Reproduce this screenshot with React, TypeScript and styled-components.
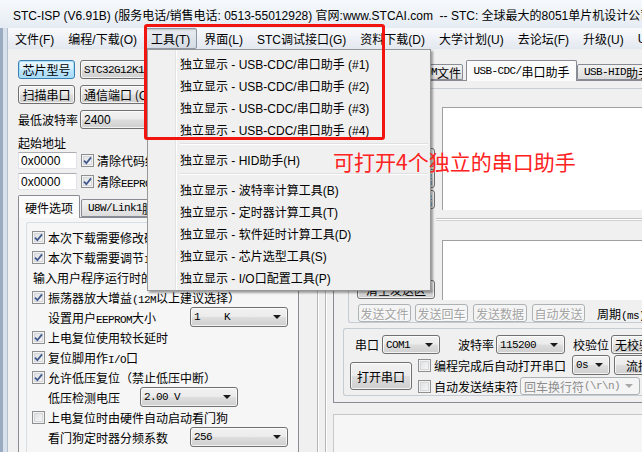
import React from 'react';
import styled, { createGlobalStyle, css } from 'styled-components';

const UI = `"Liberation Sans", "Noto Sans CJK SC", sans-serif`;
const SONG = `"Noto Sans CJK SC", "Liberation Sans", sans-serif`;

const GlobalStyle = createGlobalStyle`
  html, body { margin: 0; padding: 0; }
  body {
    width: 642px;
    height: 452px;
    overflow: hidden;
    background: #f0f0f0;
    font-family: ${UI};
    font-size: 12px;
    color: #000;
  }
`;

const Window = styled.div`
  position: relative;
  width: 642px;
  height: 452px;
  display: flex;
  flex-direction: column;
  overflow: hidden;
  background: #f0f0f0;
`;

const TitleBar = styled.div`
  height: 28px;
  flex: none;
  display: flex;
  align-items: center;
  gap: 5px;
  padding-left: 8px;
  background: linear-gradient(#f6f9fc, #e6ecf4);
  white-space: pre;
  overflow: hidden;
`;

const TitleText = styled.span`
  font-size: 12px;
  color: #000;
`;

const Frame = styled.div`
  flex: 1;
  display: flex;
  min-height: 0;
`;

const FrameEdge = styled.div`
  width: 8px;
  flex: none;
  background: linear-gradient(to right, #9aabc1 0 3px, #d7e0eb 3px 7px, #b3bfcd 7px 8px);
`;

const Client = styled.div`
  flex: 1;
  display: flex;
  flex-direction: column;
  min-width: 0;
`;

const MenuBar = styled.div`
  height: 21px;
  flex: none;
  display: flex;
  align-items: stretch;
  background: linear-gradient(#f9fafc, #e3e8f0);
  white-space: nowrap;
`;

const MenuItem = styled.div<{ $open?: boolean }>`
  display: flex;
  align-items: center;
  padding: 0 7px;
  box-sizing: border-box;
  ${(p) =>
    p.$open &&
    css`
      padding: 0 6px;
      border: 1px solid #8d97a5;
      border-radius: 2px;
      background: linear-gradient(#e9edf2, #d6dce5);
      box-shadow: inset 1px 1px 2px rgba(0, 0, 0, 0.18);
    `}
`;

const Body = styled.div`
  flex: 1;
  display: flex;
  min-height: 0;
  overflow: hidden;
`;

/* ---------- shared controls ---------- */

const Mono = styled.span`
  font-family: "Liberation Mono", monospace;
  font-size: 11px;
  letter-spacing: -0.6px;
`;

// half-width latin runs (SimSun style) inside CJK labels
const half = (s: string) =>
  s.split(/([!-~][ !-~]*)/).map((part, i) => (i % 2 ? <Mono key={i}>{part}</Mono> : part));

const Btn = styled.div<{ $w: number; $h?: number; $ml?: number; $focus?: boolean; $disabled?: boolean }>`
  width: ${(p) => p.$w}px;
  height: ${(p) => p.$h ?? 19}px;
  margin-left: ${(p) => p.$ml ?? 0}px;
  box-sizing: border-box;
  flex: none;
  display: flex;
  align-items: center;
  justify-content: center;
  border: 1px solid #707070;
  border-radius: 3px;
  background: linear-gradient(#f2f2f2 0%, #ebebeb 48%, #dddddd 52%, #cfcfcf 100%);
  box-shadow: inset 0 0 0 1px rgba(255, 255, 255, 0.75);
  font-family: ${SONG};
  white-space: nowrap;
  overflow: hidden;
  ${(p) =>
    p.$focus &&
    css`
      border-color: #3c7fb1;
      background: linear-gradient(#eaf6fd 0%, #d9f0fc 48%, #bee6fd 52%, #a7d9f5 100%);
      box-shadow: inset 0 0 0 1px #a6e0fb;
    `}
  ${(p) =>
    p.$disabled &&
    css`
      border-color: #adb2b5;
      background: #f4f4f4;
      box-shadow: none;
      color: #a3a3a3;
      text-shadow: 1px 1px 0 #fff;
    `}
`;

const Combo = styled.div<{ $w: number; $h?: number; $ml?: number; $disabled?: boolean }>`
  position: relative;
  width: ${(p) => p.$w}px;
  height: ${(p) => p.$h ?? 19}px;
  margin-left: ${(p) => p.$ml ?? 0}px;
  box-sizing: border-box;
  flex: none;
  display: flex;
  align-items: center;
  padding-left: 3px;
  border: 1px solid #707070;
  border-radius: 3px;
  background: linear-gradient(#f2f2f2 0%, #ebebeb 48%, #dddddd 52%, #cfcfcf 100%);
  box-shadow: inset 0 0 0 1px rgba(255, 255, 255, 0.75);
  font-family: ${SONG};
  white-space: pre;
  overflow: hidden;
  &::after {
    content: '';
    position: absolute;
    right: 6px;
    top: 50%;
    margin-top: -2px;
    border-left: 4px solid transparent;
    border-right: 4px solid transparent;
    border-top: 4px solid #1a1a1a;
  }
  ${(p) =>
    p.$disabled &&
    css`
      border-color: #adb2b5;
      background: #f4f4f4;
      box-shadow: none;
      color: #8d8d8d;
      &::after {
        border-top-color: #a8a8a8;
      }
    `}
`;

const Field = styled.div<{ $w: number }>`
  width: ${(p) => p.$w}px;
  height: 17px;
  box-sizing: border-box;
  flex: none;
  display: flex;
  align-items: center;
  padding-left: 2px;
  background: #fff;
  border: 1px solid #e2e3ea;
  border-top-color: #abadb3;
  font-family: ${UI};
`;

const Label = styled.span<{ $w?: number; $ml?: number }>`
  flex: none;
  ${(p) => p.$w !== undefined && `width: ${p.$w}px;`}
  margin-left: ${(p) => p.$ml ?? 0}px;
  font-family: ${SONG};
  white-space: nowrap;
`;

const Box = styled.span`
  width: 13px;
  height: 13px;
  box-sizing: border-box;
  flex: none;
  display: flex;
  align-items: center;
  justify-content: center;
  border: 1px solid #8e8f8f;
  background: linear-gradient(135deg, #dcdcdc, #fbfbfb);
  box-shadow: inset 0 0 0 1px #f2f2f2, inset 0 0 0 2px #d4d8dd;
`;

const CheckRow = styled.span`
  display: flex;
  align-items: center;
  gap: 3px;
  flex: none;
  font-family: ${SONG};
  white-space: nowrap;
`;

const CheckBox = ({ on }: { on?: boolean }) => (
  <Box>
    {on && (
      <svg width="9" height="9" viewBox="0 0 9 9">
        <path d="M1 4.6 L3.4 7.2 L8 1.4" fill="none" stroke="#41598f" strokeWidth="1.8" />
      </svg>
    )}
  </Box>
);

const Check = ({ on, children }: { on?: boolean; children: React.ReactNode }) => (
  <CheckRow>
    <CheckBox on={on} />
    <span>{children}</span>
  </CheckRow>
);

const TabStrip = styled.div<{ $h: number; $pl?: number }>`
  height: ${(p) => p.$h}px;
  flex: none;
  display: flex;
  align-items: flex-end;
  padding-left: ${(p) => p.$pl ?? 0}px;
  position: relative;
  z-index: 1;
  white-space: nowrap;
`;

const Tab = styled.div<{ $w: number; $active?: boolean; $ml?: number }>`
  width: ${(p) => p.$w}px;
  height: ${(p) => (p.$active ? 'calc(100% + 1px)' : 'calc(100% - 4px)')};
  margin-bottom: ${(p) => (p.$active ? '-1px' : '0')};
  margin-left: ${(p) => p.$ml ?? 0}px;
  box-sizing: border-box;
  flex: none;
  display: flex;
  align-items: center;
  justify-content: center;
  overflow: hidden;
  border: 1px solid #898c95;
  border-bottom: ${(p) => (p.$active ? 'none' : '1px solid #898c95')};
  border-radius: 2px 2px 0 0;
  background: ${(p) => (p.$active ? '#fbfbfb' : 'linear-gradient(#f3f3f3, #dcdcdc)')};
  font-family: ${SONG};
`;

/* ---------- left pane ---------- */

const LeftPane = styled.div`
  width: 304px;
  flex: none;
  box-sizing: border-box;
  padding: 11px 0 0 10px;
  display: flex;
  flex-direction: column;
`;

const Row = styled.div<{ $mt?: number; $h?: number; $gap?: number }>`
  height: ${(p) => p.$h ?? 19}px;
  margin-top: ${(p) => p.$mt ?? 0}px;
  flex: none;
  display: flex;
  align-items: center;
  gap: ${(p) => p.$gap ?? 5}px;
  white-space: nowrap;
`;

const TabPanel = styled.div`
  width: 281px;
  height: 260px;
  flex: none;
  box-sizing: border-box;
  padding: 4px 0 0 7px;
  border: 1px solid #898c95;
  background: #f6f6f6;
`;

const HwGroup = styled.div`
  height: 100%;
  box-sizing: border-box;
  padding: 4px 0 0 5px;
  border-left: 1px solid #d5dfe5;
  border-top: 1px solid #d5dfe5;
  border-radius: 3px 0 0 0;
  display: flex;
  flex-direction: column;
`;

const HwLine = styled.div<{ $indent?: number }>`
  height: 20px;
  flex: none;
  display: flex;
  align-items: center;
  padding-left: ${(p) => p.$indent ?? 0}px;
  font-family: ${SONG};
  white-space: nowrap;
`;

const Splitter = styled.div`
  width: 21px;
  flex: none;
  background: linear-gradient(
    to right,
    transparent 5px,
    #b7b7b7 5px 6px,
    #ffffff 6px 7px,
    transparent 7px 13px,
    #b7b7b7 13px 14px,
    #ffffff 14px 15px,
    transparent 15px
  );
`;

/* ---------- right pane ---------- */

const RightPane = styled.div`
  flex: 1;
  min-width: 0;
  display: flex;
  flex-direction: column;
  padding-top: 11px;
`;

const TabPage = styled.div`
  height: 323px;
  flex: none;
  box-sizing: border-box;
  padding: 7px 0 6px 9px;
  border: 1px solid #898c95;
  border-right: none;
  display: flex;
  flex-direction: column;
`;

const RecvArea = styled.div`
  height: 122px;
  flex: none;
  box-sizing: border-box;
  display: flex;
  border-top: 1px solid #c9ced4;
`;

const SideCol = styled.div<{ $w: number }>`
  width: ${(p) => p.$w}px;
  flex: none;
  box-sizing: border-box;
  padding: 0 7px 1px 0;
  display: flex;
  flex-direction: column;
  align-items: flex-end;
  justify-content: flex-end;
  gap: 2px;
`;

const TextPane = styled.div<{ $mt: number; $h: number }>`
  flex: 1;
  margin-top: ${(p) => p.$mt}px;
  height: ${(p) => p.$h}px;
  box-sizing: border-box;
  background: #fff;
  border-top: 1px solid #a0a0a0;
  border-left: 1px solid #a0a0a0;
`;

const Divider = styled.div`
  height: 19px;
  flex: none;
  margin-left: 93px;
  background: linear-gradient(
    to bottom,
    transparent 8px,
    #c2c2c2 8px 9px,
    #ffffff 9px 10px,
    #d0d0d0 10px 11px,
    transparent 11px
  );
`;

const SendGroup = styled.div`
  height: 94px;
  flex: none;
  margin-left: 5px;
  box-sizing: border-box;
  border-left: 1px solid #c5ccd4;
  border-bottom: 1px solid #c5ccd4;
  border-bottom-left-radius: 3px;
  display: flex;
  flex-direction: column;
`;

const SendTop = styled.div`
  height: 71px;
  flex: none;
  display: flex;
`;

const SendButtons = styled.div`
  height: 22px;
  flex: none;
  display: flex;
  align-items: flex-end;
  padding-left: 9px;
  white-space: nowrap;
`;

const SerialGroup = styled.div`
  height: 68px;
  flex: none;
  margin-top: 5px;
  box-sizing: border-box;
  border: 1px solid #c5ccd4;
  border-right: none;
  border-radius: 3px 0 0 3px;
  display: flex;
  flex-direction: column;
`;

const SerialRow = styled.div<{ $mt?: number; $h: number; $pl?: number }>`
  height: ${(p) => p.$h}px;
  margin-top: ${(p) => p.$mt ?? 0}px;
  padding-left: ${(p) => p.$pl ?? 0}px;
  flex: none;
  display: flex;
  align-items: center;
  white-space: nowrap;
`;

const SerialLower = styled.div`
  margin-top: 1px;
  display: flex;
  align-items: flex-start;
`;

const OpenCol = styled.div`
  padding: 7px 0 0 6px;
  flex: none;
`;

const OptCol = styled.div`
  margin-left: 6px;
  display: flex;
  flex-direction: column;
`;

const BottomPanel = styled.div`
  flex: 1;
  margin-top: 11px;
  border-top: 1px solid #c8c8c8;
  border-left: 1px solid #c8c8c8;
  background: #f6f6f6;
`;

/* ---------- overlays ---------- */

const Dropdown = styled.div`
  position: absolute;
  left: 147px;
  top: 49px;
  width: 284px;
  box-sizing: border-box;
  padding: 2px;
  border: 1px solid #979797;
  background: linear-gradient(to right, transparent 27px, #e2e3e3 27px 28px, #ffffff 28px 29px, transparent 29px),
    #f0f0f0;
  box-shadow: 2px 2px 2px rgba(0, 0, 0, 0.35);
  display: flex;
  flex-direction: column;
  z-index: 5;
`;

const DropItem = styled.div`
  height: 22px;
  display: flex;
  align-items: center;
  padding-left: 30px;
  white-space: nowrap;
  font-family: ${UI};
`;

const DropSep = styled.div`
  height: 8px;
  margin-left: 30px;
  background: linear-gradient(to bottom, transparent 3px, #e0e0e0 3px 4px, #ffffff 4px 5px, transparent 5px);
`;

const RedFrame = styled.div`
  position: absolute;
  left: 144px;
  top: 24px;
  width: 241px;
  height: 116px;
  box-sizing: border-box;
  border: 3px solid #f2140f;
  border-radius: 3px;
  z-index: 6;
  pointer-events: none;
`;

const Note = styled.div`
  position: absolute;
  left: 333px;
  top: 151px;
  font-family: "Noto Sans CJK SC", sans-serif;
  font-size: 21px;
  line-height: 21px;
  color: #ff2222;
  white-space: nowrap;
  z-index: 7;
`;

const StcLogo = () => (
  <svg width="17" height="17" viewBox="0 0 17 17">
    {[3.5, 6.5, 9.5, 12.5].map((r) => (
      <path
        key={r}
        d={`M2 ${14 - r} A ${r} ${r} 0 0 1 ${2 + r} 14`}
        fill="none"
        stroke="#e7336c"
        strokeWidth="1.6"
      />
    ))}
    <path d="M1 15.6 C3 13.4 6 13.4 8 15.6" fill="none" stroke="#2a55c4" strokeWidth="1.4" />
    <path d="M1 12.6 C2.5 11.2 4 11.2 5.2 12.6" fill="none" stroke="#2a55c4" strokeWidth="1.3" />
  </svg>
);

const menus = ['文件(F)', '编程/下载(O)', '工具(T)', '界面(L)', 'STC调试接口(G)', '资料下载(D)', '大学计划(U)', '去论坛(F)', '升级(U)', 'U8W(W)'];

const toolGroups = [
  [
    '独立显示 - USB-CDC/串口助手 (#1)',
    '独立显示 - USB-CDC/串口助手 (#2)',
    '独立显示 - USB-CDC/串口助手 (#3)',
    '独立显示 - USB-CDC/串口助手 (#4)',
  ],
  ['独立显示 - HID助手(H)'],
  [
    '独立显示 - 波特率计算工具(B)',
    '独立显示 - 定时器计算工具(T)',
    '独立显示 - 软件延时计算工具(D)',
    '独立显示 - 芯片选型工具(S)',
    '独立显示 - I/O口配置工具(P)',
  ],
];

type HwRow =
  | { kind: 'check'; on: boolean; text: string }
  | { kind: 'text'; text: string; indent: number }
  | { kind: 'select'; text: string; labelW: number; value: string; w: number };

const hwRows: HwRow[] = [
  { kind: 'check', on: true, text: '本次下载需要修改硬件选项' },
  { kind: 'check', on: true, text: '本次下载需要调节IRC频率' },
  { kind: 'text', text: '输入用户程序运行时的IRC频率', indent: 1 },
  { kind: 'check', on: true, text: '振荡器放大增益(12M以上建议选择）' },
  { kind: 'select', text: '设置用户EEPROM大小', labelW: 142, value: '1    K', w: 98 },
  { kind: 'check', on: true, text: '上电复位使用较长延时' },
  { kind: 'check', on: true, text: '复位脚用作I/O口' },
  { kind: 'check', on: true, text: '允许低压复位（禁止低压中断）' },
  { kind: 'select', text: '低压检测电压', labelW: 92, value: '2.00 V', w: 98 },
  { kind: 'check', on: false, text: '上电复位时由硬件自动启动看门狗' },
  { kind: 'select', text: '看门狗定时器分频系数', labelW: 142, value: '256', w: 98 },
];

export default function App() {
  return (
    <>
      <GlobalStyle />
      <Window>
        <TitleBar>
          <StcLogo />
          <TitleText>
            STC-ISP (V6.91B) (服务电话/销售电话: 0513-55012928) 官网:www.STCAI.com  -- STC: 全球最大的8051单片机设计公司
          </TitleText>
        </TitleBar>
        <Frame>
          <FrameEdge />
          <Client>
            <MenuBar>
              {menus.map((m) => (
                <MenuItem key={m} $open={m === '工具(T)'}>
                  {m}
                </MenuItem>
              ))}
            </MenuBar>
            <Body>
              <LeftPane>
                <Row>
                  <Btn $w={57} $focus>
                    芯片型号
                  </Btn>
                  <Combo $w={210}>{half('STC32G12K128')}</Combo>
                </Row>
                <Row $mt={6}>
                  <Btn $w={57}>扫描串口</Btn>
                  <Combo $w={210}>通信端口 (COM3)</Combo>
                </Row>
                <Row $mt={6}>
                  <Label $w={57}>最低波特率</Label>
                  <Combo $w={210}>
                    <span style={{ fontFamily: UI }}>2400</span>
                  </Combo>
                </Row>
                <Row $mt={5} $h={16}>
                  <Label>起始地址</Label>
                </Row>
                <Row $mt={2} $h={17} $gap={4}>
                  <Field $w={59}>0x0000</Field>
                  <Check on>清除代码缓冲区</Check>
                </Row>
                <Row $mt={4} $h={17} $gap={4}>
                  <Field $w={59}>0x0000</Field>
                  <Check on>{half('清除EEPROM缓冲区')}</Check>
                </Row>
                <TabStrip $h={22} style={{ marginTop: 5 }}>
                  <Tab $w={62} $active>
                    硬件选项
                  </Tab>
                  <Tab $w={92} $ml={1}>
                    {half('U8W/Link1脱机')}
                  </Tab>
                  <Tab $w={70}>程序加密后传输</Tab>
                </TabStrip>
                <TabPanel>
                  <HwGroup>
                    {hwRows.map((r) => {
                      if (r.kind === 'check')
                        return (
                          <HwLine key={r.text}>
                            <Check on={r.on}>{half(r.text)}</Check>
                          </HwLine>
                        );
                      if (r.kind === 'text')
                        return (
                          <HwLine key={r.text} $indent={r.indent}>
                            {half(r.text)}
                          </HwLine>
                        );
                      return (
                        <HwLine key={r.text} $indent={16}>
                          <Label $w={r.labelW}>{half(r.text)}</Label>
                          <Combo $w={r.w} $h={20}>
                            {half(r.value)}
                          </Combo>
                        </HwLine>
                      );
                    })}
                  </HwGroup>
                </TabPanel>
              </LeftPane>
              <Splitter />
              <RightPane>
                <TabStrip $h={20} $pl={2}>
                  <Tab $w={64}>程序文件</Tab>
                  <Tab $w={64}>{half('EEPROM文件')}</Tab>
                  <Tab $w={111} $ml={3} $active>
                    {half('USB-CDC/串口助手')}
                  </Tab>
                  <Tab $w={80}>{half('USB-HID助手')}</Tab>
                </TabStrip>
                <TabPage>
                  <RecvArea>
                    <SideCol $w={99}>
                      <Btn $w={78}>清空接收区</Btn>
                      <Btn $w={78}>保存接收数据</Btn>
                      <Btn $w={78}>复制接收数据</Btn>
                    </SideCol>
                    <TextPane $mt={18} $h={103} />
                  </RecvArea>
                  <Divider />
                  <SendGroup>
                    <SendTop>
                      <SideCol $w={93}>
                        <Btn $w={78}>清空发送区</Btn>
                      </SideCol>
                      <TextPane $mt={11} $h={60} />
                    </SendTop>
                    <SendButtons>
                      <Btn $w={53} $h={18} $disabled>
                        发送文件
                      </Btn>
                      <Btn $w={53} $h={18} $ml={4} $disabled>
                        发送回车
                      </Btn>
                      <Btn $w={54} $h={18} $ml={5} $disabled>
                        发送数据
                      </Btn>
                      <Btn $w={53} $h={18} $ml={5} $disabled>
                        自动发送
                      </Btn>
                      <Label $ml={12}>{half('周期(ms)')}</Label>
                    </SendButtons>
                  </SendGroup>
                  <SerialGroup>
                    <SerialRow $mt={6} $h={19} $pl={11}>
                      <Label>串口</Label>
                      <Combo $w={58} $ml={3}>
                        {half('COM1')}
                      </Combo>
                      <Label $ml={18}>波特率</Label>
                      <Combo $w={69} $ml={2}>
                        {half('115200')}
                      </Combo>
                      <Label $ml={8}>校验位</Label>
                      <Combo $w={70} $ml={2}>
                        无校验
                      </Combo>
                    </SerialRow>
                    <SerialLower>
                      <OpenCol>
                        <Btn $w={62} $h={28}>
                          打开串口
                        </Btn>
                      </OpenCol>
                      <OptCol>
                        <SerialRow $h={20}>
                          <Check>编程完成后自动打开串口</Check>
                          <Combo $w={38} $h={20} $ml={6}>
                            {half('0s')}
                          </Combo>
                          <Btn $w={60} $h={20} $ml={4}>
                            流控制
                          </Btn>
                        </SerialRow>
                        <SerialRow $mt={2} $h={18}>
                          <Check>自动发送结束符</Check>
                          <Combo $w={120} $h={18} $ml={2} $disabled>
                            {half('回车换行符(\\r\\n)')}
                          </Combo>
                        </SerialRow>
                      </OptCol>
                    </SerialLower>
                  </SerialGroup>
                </TabPage>
                <BottomPanel />
              </RightPane>
            </Body>
          </Client>
        </Frame>

        <Dropdown>
          {toolGroups.map((g, gi) => (
            <React.Fragment key={gi}>
              {gi > 0 && <DropSep />}
              {g.map((t) => (
                <DropItem key={t}>{t}</DropItem>
              ))}
            </React.Fragment>
          ))}
        </Dropdown>
        <RedFrame />
        <Note>可打开4个独立的串口助手</Note>
      </Window>
    </>
  );
}
